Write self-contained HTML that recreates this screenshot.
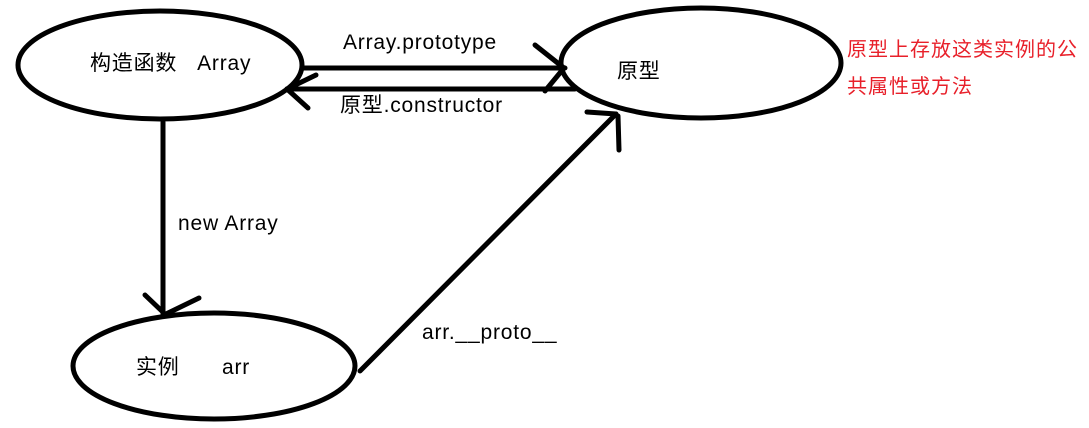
<!DOCTYPE html>
<html><head><meta charset="utf-8"><style>
html,body{margin:0;padding:0;background:#fff;}
body{width:1089px;height:428px;overflow:hidden;position:relative;}
svg{position:absolute;left:0;top:0;}
.t{position:absolute;font-family:"Liberation Sans","Noto Sans CJK SC",sans-serif;font-size:21px;letter-spacing:0.8px;color:#000;white-space:nowrap;line-height:1;}
.r{color:#e8202a;font-size:20px;letter-spacing:1px;}
</style></head><body>
<svg width="1089" height="428" viewBox="0 0 1089 428">
<g fill="none" stroke="#000" stroke-width="5" stroke-linecap="round">
<ellipse cx="160" cy="65" rx="142" ry="54"/>
<ellipse cx="701" cy="63" rx="140" ry="55"/>
<ellipse cx="214" cy="366" rx="141" ry="53"/>
<line x1="303" y1="68" x2="565" y2="68"/>
<line x1="535" y1="45" x2="564" y2="68"/>
<line x1="545" y1="91" x2="564" y2="68"/>
<line x1="287" y1="89" x2="575" y2="89"/>
<line x1="287" y1="89" x2="316" y2="75"/>
<line x1="287" y1="89" x2="308" y2="108"/>
<line x1="163" y1="122" x2="163" y2="314"/>
<line x1="145" y1="295" x2="166" y2="315"/>
<line x1="199" y1="298" x2="166" y2="314"/>
<line x1="360" y1="371" x2="616" y2="114"/>
<line x1="587" y1="112" x2="616" y2="114"/>
<line x1="618" y1="116" x2="619" y2="150"/>
</g>
</svg>
<div class="t" style="left:90px;top:53px;">构造函数&nbsp;&nbsp;&nbsp;Array</div>
<div class="t" style="left:343px;top:32px;">Array.prototype</div>
<div class="t" style="left:340px;top:95px;">原型.constructor</div>
<div class="t" style="left:617px;top:61px;">原型</div>
<div class="t" style="left:178px;top:213px;">new Array</div>
<div class="t" style="left:136px;top:357px;">实例</div>
<div class="t" style="left:222px;top:357px;">arr</div>
<div class="t" style="left:422px;top:322px;">arr.__proto__</div>
<div class="t r" style="left:847px;top:40px;">原型上存放这类实例的公</div>
<div class="t r" style="left:847px;top:77px;">共属性或方法</div>
</body></html>
